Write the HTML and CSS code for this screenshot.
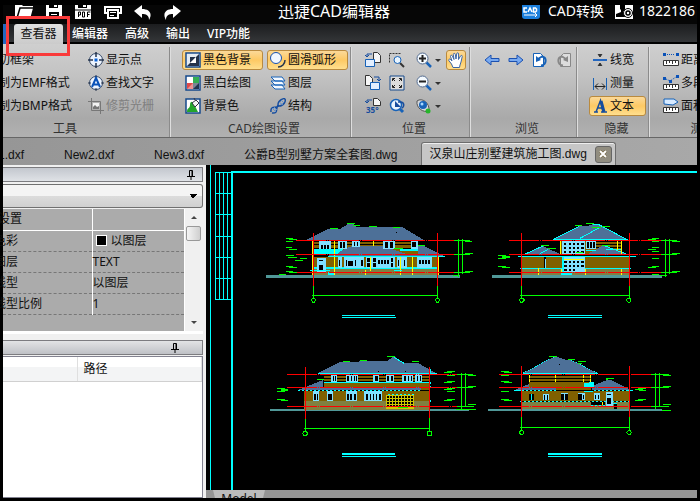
FILE: index.html
```html
<!DOCTYPE html>
<html lang="zh-CN">
<head>
  <meta charset="UTF-8">
  <title>迅捷CAD编辑器</title>
  <link rel="stylesheet" href="styles.css">
</head>
<body>
  <div class="window">
    <header class="titlebar">
      <div class="quick">
        <button class="quick-btn" aria-label="打开"><svg width="20" height="18" viewBox="0 0 20 18"><path d="M1 17V2h6l2 2h10v2l-3 11z" fill="#fff"/><path d="M3 16L6 6h13" fill="none" stroke="#000" stroke-width="1.5"/></svg></button>
        <button class="quick-btn" aria-label="保存"><svg width="18" height="18" viewBox="0 0 18 18"><path d="M1 0h16v17H1z" fill="#fff"/><path d="M4 0h9v6H4zM4 10h10v7H4z" fill="#000"/><path d="M9 0h3v5H9zM6 12h6v1H6zM6 14h6v1H6z" fill="#fff"/></svg></button>
        <button class="quick-btn" aria-label="导出PDF"><svg width="18" height="18" viewBox="0 0 18 18"><path d="M1 0h16v17H1z" fill="#fff"/><path d="M4 0h9v6H4z" fill="#000"/><path d="M9 0h3v5H9z" fill="#fff"/><path d="M0 8h18" stroke="#000"/><path d="M4.500 15v-5h2v3h-2M8.500 10v5h2v-5zM13.500 15v-5h3M13.500 12.500h2" fill="none" stroke="#000"/></svg></button>
        <button class="quick-btn" aria-label="打印"><svg width="20" height="18" viewBox="0 0 20 18"><path d="M2 5h16v6H2z" fill="none" stroke="#fff" stroke-width="2"/><path d="M5 8h10v8H5z" fill="#000" stroke="#fff" stroke-width="2"/><path d="M7 10.500h6M7 13.500h4" stroke="#fff"/></svg></button>
        <button class="quick-btn" aria-label="撤销"><svg width="18" height="18" viewBox="0 0 18 18"><path d="M0 9l8-6v4c7 0 11 4 7 11 0-5-3-6-7-6v4z" fill="#fff"/></svg></button>
        <button class="quick-btn" aria-label="重做"><svg width="18" height="18" viewBox="0 0 18 18"><path d="M18 9l-8-6v4C3 7-1 11 3 18c0-5 3-6 7-6v4z" fill="#fff"/></svg></button>
      </div>
      <h1 class="title">迅捷CAD编辑器</h1>
      <div class="account">
        <button class="account-btn"><svg width="18" height="18" viewBox="0 0 18 18"><rect width="18" height="17" rx="3" fill="#1b7fdc"/><path d="M5 6H2v4h3M6 10l2-4 2 4M11.500 6v4h2l1-1V7l-1-1z" fill="none" stroke="#fff" stroke-width="1.5"/><path d="M2 13h13l-2-2M15 13l-2 2" fill="none" stroke="#fff"/></svg>CAD转换</button>
        <button class="account-btn user"><svg width="18" height="18" viewBox="0 0 18 18"><path d="M0 0h18v17H0z" fill="#fff"/><path d="M5 3h5v5l-2 2v2h2v3H1v-3l5-2V8L5 7z" fill="#000"/><circle cx="13" cy="11" r="4.500" fill="#fff" stroke="#000"/><circle cx="13" cy="11" r="2" fill="none" stroke="#000" stroke-width="1.500"/></svg>1822186</button>
      </div>
    </header>

    <nav class="menu">
      <button class="file" aria-label="文件"></button>
      <button class="menu-tab active">查看器</button>
      <button class="menu-tab">编辑器</button>
      <button class="menu-tab">高级</button>
      <button class="menu-tab">输出</button>
      <button class="menu-tab">VIP功能</button>
      <span class="marker"></span>
    </nav>

    <div class="ribbon">
      <section class="group tools">
        <div class="cols">
          <div class="col clip">
            <button class="cmd">剪切框架</button>
            <button class="cmd">复制为EMF格式</button>
            <button class="cmd">复制为BMP格式</button>
          </div>
          <div class="col">
            <button class="cmd"><svg class="ic" viewBox="0 0 16 16"><circle cx="8" cy="8" r="6.500" fill="#eef5ff" stroke="#334766"/><path d="M8 0v5M8 11v5M0 8h5M11 8h5" stroke="#26354d" stroke-width="1.500"/><path d="M6.500 6.500h3v3h-3z" fill="#0a62d8"/></svg>显示点</button>
            <button class="cmd"><svg class="ic" viewBox="0 0 16 16"><circle cx="8" cy="8" r="6.500" fill="#eef5ff" stroke="#334766"/><path d="M8 0v3M8 13v3M0 8h3M13 8h3" stroke="#26354d"/><path d="M4 12L8 3l4 9M5.500 9.500h5" fill="none" stroke="#0a52b8" stroke-width="2"/></svg>查找文字</button>
            <button class="cmd" disabled><svg class="ic" viewBox="0 0 16 16"><path d="M3.500 0v12.500H16M0 3.500h12.500V16" fill="none" stroke="#777"/><path d="M5 5h6v6H5z" fill="#f3f3f3"/><path d="M5 11V9l2-2 2 2 2-1v3z" fill="#777"/></svg>修剪光栅</button>
          </div>
        </div>
        <h2 class="label">工具</h2>
      </section>

      <section class="group draw">
        <div class="cols">
          <div class="col">
            <button class="cmd wide on"><svg class="ic" viewBox="0 0 16 16"><path d="M1 1h14v14H1z" fill="#fff" stroke="#164a8c" stroke-width="1.500"/><path d="M2 2h12L2 14z" fill="#e4ebf3"/><path d="M14 2v12H2z" fill="#24324a"/><path d="M5 5h6L5 11z" fill="#24324a"/><path d="M11 5v6H5z" fill="#fff"/></svg>黑色背景</button>
            <button class="cmd wide"><svg class="ic" viewBox="0 0 16 16"><path d="M1 1h14v14H1z" fill="#fff" stroke="#164a8c" stroke-width="1.500"/><path d="M8 2h6v6H8z" fill="#35ae54"/><path d="M2 8h6v6H2z" fill="#e04848"/><path d="M8 8h6v6H8z" fill="#22344f"/><path d="M2 14l6-6v6zM8 8h6l-6 6z" fill="#fff" opacity=".4"/></svg>黑白绘图</button>
            <button class="cmd wide"><svg class="ic" viewBox="0 0 16 16"><path d="M1 1h14v14H1z" fill="#fff" stroke="#164a8c" stroke-width="1.500"/><path d="M2 14c0-5 3-3 3-7s3-4 4-1l4 8z" fill="#24a52b"/><path d="M7 5l4-3 3 3-4 4zM10 2L9 0" fill="#f5f5f5" stroke="#334"/></svg>背景色</button>
          </div>
          <div class="col">
            <button class="cmd wide on"><svg class="ic" viewBox="0 0 16 16"><circle cx="6" cy="6" r="5.500" fill="#f1f7ff" stroke="#1550b0"/><path d="M15 8c0 4-3 7-7 7" fill="none" stroke="#26354d" stroke-width="1.500"/></svg>圆滑弧形</button>
            <button class="cmd wide"><svg class="ic" viewBox="0 0 16 16"><path d="M1 10h11l3 4H5zM1 6h11l3 4H5zM1 2h11l3 4H5z" fill="#f4f9ff" stroke="#1762b8"/></svg>图层</button>
            <button class="cmd wide"><svg class="ic" viewBox="0 0 16 16"><path d="M1 14c-1-8 7-2 7-7s6-7 7-6M2 15c8 1 2-7 7-7s7-5 6-7" fill="none" stroke="#174d9e" stroke-width="1.500"/><path d="M2 10l4 4M4 9l3 3M9 4l4 3M11 2l3 3" stroke="#5c8fd0"/></svg>结构</button>
          </div>
        </div>
        <h2 class="label">CAD绘图设置</h2>
      </section>

      <section class="group place">
        <div class="cols">
          <div class="col">
            <button class="cmd" aria-label="向左旋转"><svg class="ic" viewBox="0 0 16 16"><path d="M8.500.5h4l3 3v7h-7z" fill="#f6f6f6" stroke="#333"/><path d="M.5 7.500h9v7h-9z" fill="#e3efff" stroke="#1762b8"/><path d="M7 2H2v3M0 3l2 2 2-2" fill="none" stroke="#174d9e"/></svg></button>
            <button class="cmd" aria-label="向右旋转"><svg class="ic" viewBox="0 0 16 16"><path d="M.5.5h4l3 3v7h-7z" fill="#f6f6f6" stroke="#333"/><path d="M5.500 7.500h9v7h-9z" fill="#e3efff" stroke="#1762b8"/><path d="M9 2h5v4M12 4l2 2 2-2" fill="none" stroke="#174d9e"/></svg></button>
            <button class="cmd" aria-label="旋转35°"><svg class="ic" viewBox="0 0 16 16"><path d="M8.500.5h4l3 3v4h-7z" fill="#f6f6f6" stroke="#333"/><path d="M7 2H2v3M0 3l2 2 2-2" fill="none" stroke="#174d9e"/><text class="deg" x="1" y="15">35°</text></svg></button>
          </div>
          <div class="col">
            <button class="cmd" aria-label="窗口缩放"><svg class="ic" viewBox="0 0 16 16"><path d="M.5 10.500v-9h11" fill="none" stroke="#333" stroke-dasharray="2 1"/><path d="M11 11l4 4" stroke="#333" stroke-width="2"/><circle cx="8.500" cy="8" r="3.500" fill="#e9f5ff" stroke="#1762b8"/></svg></button>
            <button class="cmd" aria-label="全部显示"><svg class="ic" viewBox="0 0 16 16"><path d="M1 1h14v14H1z" fill="#ddd" stroke="#164a8c"/><path d="M3.500 6V3.500H6M10 3.500h2.500V6M3.500 10v2.500H6M10 12.500h2.500V10M4 4l2 2M12 4l-2 2M4 12l2-2M12 12l-2-2" fill="none" stroke="#222"/></svg></button>
            <button class="cmd" aria-label="上一视图"><svg class="ic" viewBox="0 0 16 16"><path d="M10 10l4 4" stroke="#1762b8" stroke-width="3"/><circle cx="7" cy="7" r="5.500" fill="#e9f5ff" stroke="#1762b8" stroke-width="1.500"/><path d="M6 3v6h6z" fill="#174d9e"/><path d="M9 4h3c4 1 3 5 1 6" fill="none" stroke="#174d9e" stroke-width="1.500"/></svg></button>
          </div>
          <div class="col zooms">
            <button class="cmd drop" aria-label="放大"><svg class="ic" viewBox="0 0 16 16"><path d="M10 10l5 5" stroke="#1762b8" stroke-width="2.500"/><circle cx="6.500" cy="6.500" r="5.500" fill="#f4faff" stroke="#546c90"/><path d="M3 6.500h7M6.500 3v7" stroke="#222" stroke-width="2"/></svg></button>
            <button class="cmd drop" aria-label="缩小"><svg class="ic" viewBox="0 0 16 16"><path d="M10 10l5 5" stroke="#1762b8" stroke-width="2.500"/><circle cx="6.500" cy="6.500" r="5.500" fill="#f4faff" stroke="#546c90"/><path d="M3 6.500h7" stroke="#222" stroke-width="2"/></svg></button>
            <button class="cmd drop" aria-label="视图"><svg class="ic" viewBox="0 0 16 16"><path d="M1 3c5-4 13 2 12 10C7 15 0 10 1 3z" fill="#d5d8dc" stroke="#555"/><circle cx="7" cy="7" r="4" fill="#1762b8"/><circle cx="6" cy="6" r="1.500" fill="#a8d8ff"/><circle cx="12" cy="13" r="2.500" fill="#26b52b"/></svg></button>
          </div>
          <div class="col">
            <button class="cmd on" aria-label="平移"><svg class="ic" viewBox="0 0 16 16"><path d="M5 15.500L3.500 12 .8 8.500c-.5-1.500 1-1.800 2-.8L4 9 2.500 4.500c-.2-1.500 1.400-1.700 1.900-.4L6 7.500 5.300 2.500c0-1.500 1.700-1.500 2 0L8 7l.7-5.200c.2-1.500 1.900-1.300 1.900.2L10.500 7.500 12.500 4c.7-1.200 2-.6 1.700.7L13 10l-1 3-.5 2.500z" fill="#fff" stroke="#3b67a8"/></svg></button>
          </div>
        </div>
        <h2 class="label">位置</h2>
      </section>

      <section class="group browse">
        <div class="cols">
          <button class="cmd" aria-label="后退"><svg class="ic" viewBox="0 0 16 16"><path d="M1 8l6-5v3.500h8v3H7V13z" fill="#79aaf0" stroke="#1b50b0"/></svg></button>
          <button class="cmd" aria-label="前进"><svg class="ic" viewBox="0 0 16 16"><path d="M15 8L9 3v3.500H1v3h8V13z" fill="#79aaf0" stroke="#1b50b0"/></svg></button>
          <button class="cmd" aria-label="撤销视图"><svg class="ic" viewBox="0 0 16 16"><path d="M1.500 1.500h7l3 3v10h-10z" fill="#fff" stroke="#1762b8"/><path d="M9 13.500c6-1 6-8 1-9L6 7" fill="none" stroke="#1762b8" stroke-width="2"/><path d="M4 4v6l5-2z" fill="#1762b8"/></svg></button>
          <button class="cmd" disabled aria-label="重做视图"><svg class="ic" viewBox="0 0 16 16"><path d="M14.500 1.500h-7l-3 3v10h10z" fill="#ddd" stroke="#888"/><path d="M7 13.500c-6-1-6-8-1-9L10 7" fill="none" stroke="#888" stroke-width="2"/><path d="M12 4v6L7 8z" fill="#888"/></svg></button>
        </div>
        <h2 class="label">浏览</h2>
      </section>

      <section class="group hide">
        <div class="cols">
          <div class="col">
            <button class="cmd"><svg class="ic" viewBox="0 0 16 16"><path d="M1 7h14v2H1z" fill="#2467c0"/><path d="M8 2v2M8 12v2M6 2l2 3 2-3M6 14l2-3 2 3" stroke="#333" fill="#333"/></svg>线宽</button>
            <button class="cmd"><svg class="ic" viewBox="0 0 16 16"><path d="M1.500 3v12M14.500 3v12" stroke="#1762b8"/><path d="M3 11.500h10M6 8.500l-3 3 3 3M10 8.500l3 3-3 3" stroke="#222" fill="none"/></svg>测量</button>
            <button class="cmd on"><svg class="ic" viewBox="0 0 16 16"><path d="M4 14L8.500 2.500 11 14M5 10h5" fill="none" stroke="#174d9e" stroke-width="1.500"/><path d="M9 3l3 11" stroke="#174d9e" stroke-width="3"/><path d="M2 14h4M9 14h6" stroke="#174d9e" stroke-width="1.500"/></svg>文本</button>
          </div>
        </div>
        <h2 class="label">隐藏</h2>
      </section>

      <section class="group measure">
        <div class="cols">
          <div class="col">
            <button class="cmd"><svg class="ic" viewBox="0 0 16 16"><path d="M0 1h3v3H0zM13 1h3v3h-3z" fill="#0a52b8"/><path d="M4 2.500h8" stroke="#0a52b8" stroke-dasharray="1 1"/><path d="M.5 8.500h15v5H.5z" fill="#fff" stroke="#333"/><path d="M3.500 9v3M6.500 9v2M9.500 9v3M12.500 9v2" stroke="#333"/></svg>距离</button>
            <button class="cmd"><svg class="ic" viewBox="0 0 16 16"><path d="M0 2h3v3H0zM6 5h3v3H6zM13 0h3v3h-3z" fill="#0a52b8"/><path d="M3 4l4 2 6-4" fill="none" stroke="#0a52b8" stroke-dasharray="1 1"/><path d="M.5 9.500h15v5H.5z" fill="#fff" stroke="#333"/><path d="M3.500 10v3M6.500 10v2M9.500 10v3M12.500 10v2" stroke="#333"/></svg>多段线长度</button>
            <button class="cmd"><svg class="ic" viewBox="0 0 16 16"><path d="M1 6V1h10l4 3-5 3z" fill="#d7eaff" stroke="#1762b8"/><path d="M.5 9.500h15v5H.5z" fill="#fff" stroke="#333"/><path d="M3.500 10v3M6.500 10v2M9.500 10v3M12.500 10v2" stroke="#333"/></svg>面积</button>
          </div>
        </div>
        <h2 class="label">测量</h2>
      </section>
    </div>

    <nav class="docs">
      <button class="doc first">New1.dxf</button>
      <button class="doc">New2.dxf</button>
      <button class="doc">New3.dxf</button>
      <button class="doc">公爵B型别墅方案全套图.dwg</button>
      <div class="doc-active">
        <button class="doc-name">汉泉山庄别墅建筑施工图.dwg</button>
        <button class="close" aria-label="关闭"><svg width="8" height="8" viewBox="0 0 8 8"><path d="M1 1l6 6M7 1L1 7" stroke="#6b5a30" stroke-width="3"/><path d="M1 1l6 6M7 1L1 7" stroke="#fff" stroke-width="2"/></svg></button>
      </div>
    </nav>

    <main class="main">
      <aside class="side">
        <div class="panel-head">
          <button class="pin" aria-label="固定属性"><svg width="8" height="10" viewBox="0 0 8 10"><path d="M2.500 6V.5h3V6M0 6.500h8M4 7v3M5 1v5" fill="none" stroke="#000"/></svg></button>
        </div>
        <select class="combo" aria-label="对象"><option></option></select>
        <div class="props">
          <table class="prop-table">
            <tr class="section"><th>设置</th><td></td></tr>
            <tr><th>色彩</th><td><span class="swatch"></span>以图层</td></tr>
            <tr><th>图层</th><td>TEXT</td></tr>
            <tr><th>线型</th><td>以图层</td></tr>
            <tr><th>线型比例</th><td>1</td></tr>
          </table>
          <div class="scroll">
            <button class="arrow" aria-label="向上"><svg width="6" height="3" viewBox="0 0 8 4"><path d="M0 4l4-4 4 4z" fill="#444"/></svg></button>
            <span class="thumb"></span>
            <button class="arrow down" aria-label="向下"><svg width="6" height="3" viewBox="0 0 8 4"><path d="M0 0l4 4 4-4z" fill="#444"/></svg></button>
          </div>
        </div>
        <div class="panel-head second">
          <button class="pin" aria-label="固定收藏"><svg width="8" height="10" viewBox="0 0 8 10"><path d="M2.500 6V.5h3V6M0 6.500h8M4 7v3M5 1v5" fill="none" stroke="#000"/></svg></button>
        </div>
        <div class="files">
          <table class="file-table">
            <tr><th class="name"></th><th>路径</th></tr>
          </table>
        </div>
      </aside>

      <div class="view">
        <svg class="canvas">
          <!-- sheet border and title strip -->
          <path class="c" d="M4.500 0v2000M9 7.500h16M9 28.500h16M9 49.500h16M9 71.500h16M9 92.500h16M9 113.500h16M9 134.500h16M9.500 7v128M13.500 7v128M17.500 7v128M21.500 7v128"/>
          <path class="c thick" d="M26 2000V7h3000"/>

          <!-- front elevation -->
          <svg class="elev" x="54" y="45" width="220" height="115" viewBox="0 0 660 345">
            <path fill="#509898" d="M18 195h582v9H18z"/>
            <path fill="#806000" d="M159 93h315v39H159zM159 141h378v33H159z"/>
            <path fill="#808040" d="M159 177h378v18H159z"/>
            <path fill="#000" d="M162 93h300v3H162zM162 102h300v3H162zM162 114h300v3H162z"/>
            <path fill="#4d7098" d="M138 90l66-33h36l24-15h15l9 9h138l66 39zM204 138l72-30h90l75 24h33V105h12l66 33z"/>
            <path fill="#00ffff" d="M159 117h93l-21 15h-72zM420 117h54v6h-54zM159 171h378v6H159zM204 186h21v9h-21z"/>
            <path fill="#80e0ff" d="M177 93h36v24h-36zM234 93h27v24h-27zM276 93h24v18h-24zM369 93h36v24h-36zM453 93h21v24h-21zM171 144h27v42h-27zM234 141h12v33h-12zM252 141h60v33h-60zM318 141h87v33h-87zM411 141h30v33h-30zM471 141h45v33h-45z"/>
            <path fill="#000" d="M183 105h6v12h-6zM192 105h6v12h-6zM201 105h6v12h-6zM240 96h6v18h-6zM249 96h6v18h-6zM282 96h3v12h-3zM291 96h3v12h-3zM375 96h9v18h-9zM390 96h9v18h-9zM456 96h12v15h-12zM177 150h12v3h-12zM177 165h12v18h-12zM237 150h3v18h-3zM258 150h3v18h-3zM264 153h15v15h-15zM285 150h3v18h-3zM303 150h6v18h-6zM321 144h9v12h-9zM321 159h9v12h-9zM339 144h9v12h-9zM339 159h9v12h-9zM354 150h6v12h-6zM363 150h6v12h-6zM372 150h6v12h-6zM381 150h6v12h-6zM393 144h6v12h-6zM393 159h6v12h-6zM414 150h3v18h-3zM432 150h3v18h-3zM477 150h6v12h-6zM486 150h6v12h-6zM495 150h6v12h-6zM504 150h6v12h-6zM408 66h3v3h-3z"/>
            <path class="y" d="M157.500 93v102M223.500 93v102M340.500 93v15M331.500 141v42M421.500 141v54M457.500 141v54M535.500 141v54M316.500 180v15"/>
            <path class="c" d="M204 139.500h351M150 181.500h60M402 181.500h24"/>
            <path class="r level" d="M108 91.500h474M108 133.500h474M108 187.500h474"/>
            <path class="r" d="M160.500 69v159M532.500 69v159"/>
            <path class="g" d="M78 85.500h21M78 94.500h21M87 88.500h24M78 112.500h18M87 118.500h24M78 136.500h24M84 142.500h27M105 151.500h24M120 145.500h21M78 169.500h21M87 172.500h24M78 184.500h21M87 187.500h24M57 193.500h21M210 55.500h24M261 40.500h24M279 46.500h21M327 49.500h24M399 52.500h21M402 115.500h27M474 106.500h21M582 91.500h48M615 94.500h21M582 133.500h48M615 130.500h24M582 187.500h48M615 184.500h24M579 196.500h18M595.500 87v114M607.500 87v105"/>
            <path class="g" d="M157 256.500h378M160.500 228v36M532.500 228v36M157.500 264h6l3 6-3 6h-6l-3-6zM529.500 264h6l3 6-3 6h-6l-3-6z"/>
            <path class="c" d="M246 316.500h159M246 322.500h162"/>
          </svg>

          <!-- side elevation -->
          <svg class="elev" x="274" y="45" width="220" height="115" viewBox="0 0 660 345">
            <path fill="#509898" d="M36 195h510v9H36z"/>
            <path fill="#806000" d="M240 93h186v39H240zM123 141h327v33H123z"/>
            <path fill="#808040" d="M123 177h327v18H123z"/>
            <path fill="#000" d="M348 93h75v3h-75zM348 102h75v3h-75zM348 111h75v3h-75zM192 141h6v33h-6z"/>
            <path fill="#4d7098" d="M219 90l78-42h24l18-6h15l90 48zM129 135l60-27 57 27zM318 135l48-27h12l72 27z"/>
            <path class="c" d="M219 88.500h225M222 87l75-38M300 85l60-33M339 42.500h15l90 48M129 135l60-27M180 130l24-12M375 108l72 27M114 139.500h354M120 175.500h333M318 121.500h30M378 118.500h45M240 93v36"/>
            <path fill="#80e0ff" d="M246 93h69v39h-69zM318 93h30v24h-30zM246 141h69v45h-69zM195 147h3v27h-3z"/>
            <path fill="#000" d="M252 99h6v6h-6zM267 99h6v6h-6zM279 99h6v6h-6zM291 99h6v6h-6zM303 99h9v6h-9zM252 111h6v6h-6zM267 111h6v6h-6zM279 111h6v6h-6zM291 111h6v6h-6zM303 111h9v6h-9zM252 123h6v6h-6zM267 123h6v6h-6zM279 123h6v6h-6zM291 123h6v6h-6zM303 123h9v6h-9zM252 153h9v6h-9zM267 153h6v6h-6zM279 153h6v6h-6zM291 153h6v6h-6zM303 153h9v6h-9zM252 165h9v6h-9zM267 165h6v6h-6zM279 165h6v6h-6zM291 165h6v6h-6zM303 165h9v6h-9zM252 177h9v6h-9zM267 177h6v6h-6zM279 177h6v6h-6zM321 96h6v18h-6zM330 96h6v18h-6zM339 96h6v18h-6z"/>
            <path class="y" d="M241.500 93v39M412.500 93v27M424.500 93v39M175.500 174v21M244.500 177v18M316.500 177v18M424.500 177v18M246 148.500h66"/>
            <path class="c thick" d="M243 192h33M247.500 141v51"/>
            <path class="r level" d="M87 91.500h456M87 133.500h456M87 187.500h456"/>
            <path class="r" d="M124.500 69v159M448.500 69v159"/>
            <path class="g" d="M54 136.500h24M66 139.500h24M54 145.500h24M66 142.500h24M54 169.500h24M66 172.500h24M285 46.500h21M318 40.500h24M336 52.500h27M366 49.500h24M183 106.500h24M204 115.500h24M288 127.500h21M366 106.500h24M504 88.500h24M516 85.500h21M516 94.500h21M516 112.500h21M504 118.500h24M516 124.500h21M516 145.500h21M516 169.500h21M504 172.500h24M516 193.500h21M543 91.500h48M576 94.500h24M543 133.500h48M576 130.500h24M543 187.500h48M576 184.500h24M540 196.500h21M556.500 87v114M568.500 87v105"/>
            <path class="g" d="M120 256.500h327M124.500 228v36M448.500 228v36M121.500 264h6l6 6-6 6h-6l-3-6zM444.500 264h6l3 6-3 6h-6l-6-6z"/>
            <path class="c" d="M204 316.500h162M204 322.500h162"/>
          </svg>

          <!-- rear elevation -->
          <svg class="elev" x="54" y="180" width="220" height="120" viewBox="0 0 660 360">
            <path fill="#509898" d="M30 192h597v6H30z"/>
            <path fill="#806000" d="M192 90h315v45H192zM132 138h375v30H132z"/>
            <path fill="#808040" d="M132 168h375v27H132z"/>
            <path fill="#000" d="M192 90h315v3H192zM192 99h315v3H192zM192 108h315v3H192z"/>
            <path fill="#4d7098" d="M174 84l66-33h51l9-3h81l18-12h6l27 18h42l54 30zM114 135l75-30v21h294v9z"/>
            <path class="c" d="M174 85.500h357M192 112.500h315M402 37l30 18M510 72v12"/>
            <path class="c" stroke-dasharray="6 6" d="M114 135.500h369M510.500 111v24M510.500 165v6M384 148.500h81"/>
            <path fill="#80e0ff" d="M213 87h18v24h-18zM258 90h36v21h-36zM339 90h18v21h-18zM378 87h24v24h-24zM426 90h33v21h-33zM465 87h21v24h-21zM159 138h18v30h-18zM201 138h18v30h-18zM258 138h33v30h-33zM312 138h54v30h-54z"/>
            <path fill="#000" d="M219 93h3v15h-3zM225 93h3v15h-3zM261 93h6v15h-6zM273 93h3v15h-3zM282 93h3v15h-3zM288 93h3v15h-3zM345 93h9v15h-9zM381 93h6v15h-6zM393 93h6v15h-6zM432 93h6v15h-6zM444 93h3v15h-3zM453 93h3v15h-3zM471 93h3v15h-3zM480 93h3v15h-3zM162 147h6v18h-6zM171 147h3v18h-3zM204 147h12v18h-12zM261 147h6v18h-6zM270 147h6v18h-6zM282 147h6v18h-6zM318 147h6v18h-6zM330 147h3v18h-3zM339 147h3v18h-3zM348 147h3v18h-3zM357 147h6v18h-6zM354 78h3v3h-3zM435 78h3v3h-3z"/>
            <path fill="#d0c800" d="M378 150h84v42h-84z"/>
            <path stroke="#000" stroke-width="6" stroke-dasharray="6 3" d="M381 156h78M381 165h78M381 174h78M381 183h78"/>
            <path class="r level" d="M81 88.500h510M81 127.500h510M81 184.500h510"/>
            <path class="r" d="M136.500 66v156M508.500 66v156"/>
            <path class="g" d="M51 130.500h24M63 133.500h21M51 139.500h24M63 136.500h21M51 163.500h24M63 166.500h21M171 103.500h21M249 49.500h21M300 46.500h21M381 34.500h24M456 49.500h21M414 187.500h30M561 79.500h24M552 82.500h24M561 91.500h24M561 109.500h24M552 112.500h24M561 130.500h24M552 133.500h24M561 139.500h24M561 163.500h24M552 166.500h24M591 88.500h48M624 91.500h24M591 127.500h48M624 124.500h24M591 184.500h51M624 178.500h24M588 193.500h60M604.500 84v111M616.500 84v99"/>
            <path class="g" d="M133 250.500h378M136.500 222v39M508.500 219v39M131.500 259.500h7l5 6-5 6h-7l-4-6zM502.500 259.500h12v12h-12z"/>
            <path class="c thick" d="M246 327h159"/><path class="c" d="M246 334.500h162"/>
          </svg>

          <!-- side elevation, garage end -->
          <svg class="elev" x="274" y="180" width="220" height="120" viewBox="0 0 660 360">
            <path fill="#509898" d="M24 192h522v6H24z"/>
            <path fill="#806000" d="M147 90h186v45H147zM123 138h327v30H123z"/>
            <path fill="#808040" d="M123 171h327v21H123z"/>
            <path fill="#000" d="M150 90h180v3H150zM150 99h180v3H150zM150 108h180v3H150zM333 171h42v9h-42zM402 177h9v15h-9z"/>
            <path fill="#4d7098" d="M129 84l93-48h12l24 9h15l78 39zM105 135l42-18v9h81v9zM336 135v-12l45-18h12l60 30z"/>
            <path fill="#00ffff" d="M312 114l30-3v12l-6 6h-24zM312 138h27v3h-27z"/>
            <path class="c" d="M129 85.500h225M102 135.500h24M438 135.500h21M399 175.500h12"/>
            <path class="c" stroke-dasharray="3 3" d="M129 84l93-48M273 45l78 39"/>
            <path class="c" stroke-dasharray="6 6" d="M126 136.500h102M342 136.500h102M120 169.500h333M333 181.500h66"/>
            <path fill="#80e0ff" d="M189 147h18v18h-18zM243 144h21v21h-21zM294 144h21v21h-21zM342 144h18v21h-18zM378 141h21v42h-21z"/>
            <path fill="#000" d="M147 147h15v18h-15zM192 150h3v15h-3zM201 150h3v15h-3zM243 147h9v18h-9zM255 147h9v18h-9zM294 147h12v18h-12zM309 150h3v12h-3zM345 150h3v12h-3zM354 150h3v12h-3zM381 147h12v3h-12zM381 159h12v18h-12zM237 57h3v3h-3z"/>
            <path class="c" d="M154.500 147v18"/>
            <path class="y" stroke-dasharray="9 3" d="M148.500 90v24M226.500 90v24M310.500 90v24M331.500 90v24"/><path class="y" d="M367.500 171v9"/>
            <path class="r level" d="M57 88.500h456M57 127.500h456M57 184.500h456"/>
            <path class="r" d="M124.500 63v153M448.500 63v153"/>
            <path class="g" d="M63 79.500h24M72 82.500h24M63 91.500h24M63 109.500h24M72 112.500h24M63 139.500h24M63 163.500h24M72 166.500h24M207 34.500h24M264 43.500h21M294 49.500h24M294 55.500h12M378 100.500h24M378 103.500h6M474 130.500h24M465 133.500h24M477 136.500h21M474 163.500h24M465 166.500h24M513 88.500h54M549 91.500h24M513 127.500h54M549 124.500h24M513 184.500h54M549 178.500h24M546 196.500h27M526.500 84v108M538.500 84v99"/>
            <path class="g" d="M120 247.500h327M124.500 216v39M448.500 216v39M121.500 256.500h6l4 6-4 6h-6l-3-6zM444.500 256.500h6l4 6-4 6h-6l-4-6z"/>
            <path class="c thick" d="M204 327h162"/><path class="c" d="M204 334.500h162"/>
          </svg>
        </svg>
        <div class="sheets"><button class="sheet">Model</button></div>
      </div>
    </main>
  </div>
</body>
</html>
```
FILE: styles.css
```css
* {
  box-sizing: border-box;
}
body {
  margin: 0;
  background: #000;
  color: #111;
  font: 12px/16px "Noto Sans", "Noto Sans CJK SC", sans-serif;
}
button {
  margin: 0;
  padding: 0;
  border: 0;
  background: none;
  color: inherit;
  font: inherit;
  white-space: nowrap;
}
svg {
  display: block;
  flex: none;
}
.window {
  display: flex;
  flex-direction: column;
  min-height: 100vh;
  padding: 5px 3px 3px;
  overflow: hidden;
}

/* title bar */
.titlebar {
  display: grid;
  grid-template-columns: 1fr auto 1fr;
  grid-template-rows: 12px;
  align-items: center;
  height: 19px;
  padding-right: 2px;
  background: #060606;
  color: #fff;
  overflow: hidden;
}
.quick {
  display: flex;
  gap: 11px;
  padding-left: 11px;
}
.title {
  margin: 0;
  padding-right: 30px;
  font-size: 16px;
  line-height: 20px;
  font-weight: normal;
}
.account {
  display: flex;
  gap: 11px;
  justify-content: flex-end;
}
.account-btn {
  display: flex;
  align-items: center;
  gap: 8px;
  font-size: 14px;
  line-height: 20px;
}
.account-btn.user {
  gap: 6px;
}

/* menu */
.menu {
  position: relative;
  display: flex;
  gap: 1px;
  height: 20px;
  background: linear-gradient(#1c1d1f, #343638 90%, #000 91%);
  color: #fff;
}
.file {
  width: 3px;
  margin-right: 7px;
  background: #2468c0;
}
.menu-tab {
  padding: 0 8px;
  font-weight: 500;
}
.menu-tab.active {
  width: 49px;
  padding: 0;
  border-radius: 3px 3px 0 0;
  background: linear-gradient(#e0e0e0, #cbcbcb);
  color: #111;
  font-weight: normal;
}
.marker {
  position: absolute;
  left: 3px;
  top: -8px;
  width: 64px;
  height: 40px;
  border: 3px solid #f93a3a;
  z-index: 2;
}

/* ribbon */
.ribbon {
  display: flex;
  height: 94px;
  padding-top: 3px;
  background: linear-gradient(#cfcfcf, #c2c2c2 35%, #a9a9a9 80%, #b1b1b1);
  border-bottom: 1px solid #666;
  overflow: hidden;
}
.group {
  display: flex;
  flex-direction: column;
  flex: none;
  border-right: 1px solid #8b8b8b;
  box-shadow: 1px 0 #dedede;
}
.cols {
  display: flex;
  align-items: flex-start;
  flex: 1;
  padding-top: 3px;
}
.col {
  display: flex;
  flex-direction: column;
  align-items: flex-start;
  gap: 3px;
}
.cmd {
  display: flex;
  align-items: center;
  gap: 2px;
  height: 20px;
  padding: 0 2px;
  border: 1px solid transparent;
  border-radius: 3px;
}
.cmd.wide {
  width: 81px;
}
.cmd.on {
  border-color: #b98a3e;
  background: linear-gradient(#fbd999, #fdc964 50%, #ffdf8e);
}
.cmd:disabled {
  color: #808080;
}
.ic {
  width: 16px;
  height: 16px;
}
.drop::after {
  content: "";
  margin-left: 1px;
  border: 3px solid transparent;
  border-top-color: #333;
  border-bottom: 0;
}
.label {
  margin: 0;
  padding-left: 8px;
  color: #333;
  font-size: 12px;
  line-height: 16px;
  font-weight: normal;
  text-align: center;
}
.tools {
  width: 167px;
}
.tools .label {
  padding: 0 42px 0 0;
}
.clip {
  width: 102px;
  margin-left: -20px;
}
.draw {
  width: 181px;
}
.draw .cols {
  gap: 4px;
  padding-left: 12px;
}
.place {
  width: 119px;
}
.place .cols {
  gap: 2px;
  padding-left: 11px;
}
.zooms {
  margin-left: 3px;
}
.place .cmd.on {
  padding: 0 1px;
}
.deg {
  fill: #174d9e;
  font-size: 8px;
  font-weight: bold;
}
.browse {
  width: 107px;
}
.browse .cols {
  gap: 2px;
  padding-left: 11px;
}
.hide {
  width: 72px;
}
.hide .cols {
  padding-left: 12px;
}
.hide .cmd {
  width: 57px;
}
.measure {
  flex: 1 0 99px;
  border-right: 0;
}
.measure .cols {
  padding-left: 11px;
}

/* open drawings */
.docs {
  display: flex;
  height: 27px;
  padding-top: 4px;
  background: linear-gradient(90deg, #969696, #a8a8a8);
  font-family: "Liberation Sans", "Noto Sans CJK SC", sans-serif;
  overflow: hidden;
}
.doc {
  flex: none;
  padding: 2px 20px 0;
}
.doc.first {
  margin-left: -49px;
}
.doc-active {
  display: flex;
  flex: none;
  align-items: center;
  gap: 8px;
  margin-left: 4px;
  padding: 0 3px 0 7px;
  border: 1px solid #6d6d6d;
  border-bottom: 0;
  border-radius: 3px 3px 0 0;
  background: #c6c6c6;
  box-shadow: inset 0 1px #eee;
}
.close {
  display: flex;
  align-items: center;
  justify-content: center;
  width: 17px;
  height: 17px;
  border: 1px solid #666;
  border-radius: 3px;
  background: #918d80;
}

/* side panels */
.main {
  display: flex;
  flex: 1;
}
.side {
  display: flex;
  flex-direction: column;
  flex: none;
  width: 203px;
  padding: 2px 3px 0 0;
  background: #f0f0f0;
}
.panel-head {
  display: flex;
  justify-content: flex-end;
  align-items: center;
  height: 15px;
  padding-right: 7px;
  border: 1px solid #7c7c80;
  border-left: 0;
  background: linear-gradient(#c3c7ce, #dfe2e6);
}
.panel-head.second {
  margin-top: 6px;
  padding-right: 23px;
  background: linear-gradient(#e2e3e5, #bfc1c6);
}
.combo {
  height: 24px;
  margin: 2px 0 1px;
  border: 1px solid #707070;
  border-left: 0;
  border-radius: 0 3px 3px 0;
  appearance: none;
  background:
    conic-gradient(from -45deg at 50% 100%, #000 90deg, transparent 0) right 5px center / 8px 4px no-repeat,
    linear-gradient(#f4f4f4 50%, #dcdcdc 51%, #d0d0d0);
  background:
    conic-gradient(from -45deg at 50% 100%, #000 90deg, transparent 0) right 5px center / 8px 4px no-repeat,
    linear-gradient(#f4f4f4 50%, #dcdcdc 51%, #d0d0d0);
}
.props {
  display: flex;
  align-items: flex-start;
  height: 125px;
  border-bottom: 3px solid #fff;
  background: linear-gradient(90deg, #ababab 181px, #fff 181px, #fff 182px, #f0f0f0 182px);
}
.prop-table {
  flex: 1;
  table-layout: fixed;
  border-collapse: collapse;
}
.prop-table th,
.prop-table td {
  height: 21px;
  padding: 0;
  border-bottom: 1px dashed #777;
  font-weight: normal;
  text-align: left;
  white-space: nowrap;
}
.prop-table th {
  width: 89px;
  border-right: 1px solid #fff;
  text-indent: -9px;
}
.prop-table .section th,
.prop-table .section td {
  border-bottom: 1px solid #fff;
}
.prop-table .section th {
  text-indent: -5px;
}
.swatch {
  display: inline-block;
  width: 11px;
  height: 11px;
  margin: 0 4px 0 3px;
  border: 1px solid #fff;
  background: #000;
  vertical-align: -1px;
}
.scroll {
  display: flex;
  flex-direction: column;
  width: 19px;
  height: 122px;
  padding: 0 2px;
}
.arrow {
  display: flex;
  align-items: center;
  justify-content: center;
  height: 17px;
}
.arrow.down {
  margin-top: auto;
}
.thumb {
  height: 15px;
  border: 1px solid #999;
  border-radius: 2px;
  background: linear-gradient(90deg, #f5f5f5, #cfcfcf);
}
.files {
  flex: 1;
  margin-top: 1px;
  border: 1px solid #828290;
  border-left: 0;
  background: #fff;
}
.file-table {
  width: 100%;
  border-collapse: collapse;
  background: linear-gradient(#fff 40%, #f3f4f5 41%);
}
.file-table th {
  height: 24px;
  padding: 0 0 0 6px;
  border-right: 1px solid #dfdfdf;
  border-bottom: 1px solid #d0d0d0;
  font-weight: normal;
  text-align: left;
}
.file-table .name {
  width: 74px;
}

/* drawing */
.view {
  display: flex;
  flex-direction: column;
  flex: 1;
  min-width: 0;
  background: #000;
}
.canvas {
  flex: 1;
  width: 100%;
  min-height: 320px;
  shape-rendering: crispEdges;
}
.c, .r, .g, .y {
  fill: none;
  stroke-width: 1;
}
.c { stroke: #00ffff; }
.r { stroke: #ff0000; }
.g { stroke: #00ff00; }
.y { stroke: #ffff00; }
.thick { stroke-width: 2; }
.elev .c, .elev .r, .elev .g, .elev .y { stroke-width: 3; }
.elev .thick { stroke-width: 6; }
.level { stroke-dasharray: 90 3 3 3; }
.sheets {
  height: 8px;
  padding-left: 7px;
  background: #959595;
  overflow: hidden;
}
.sheet {
  width: 52px;
  padding-top: 1px;
  background: #bcbcbc;
  clip-path: polygon(0 0, 100% 0, 92% 100%, 8% 100%);
}
```
